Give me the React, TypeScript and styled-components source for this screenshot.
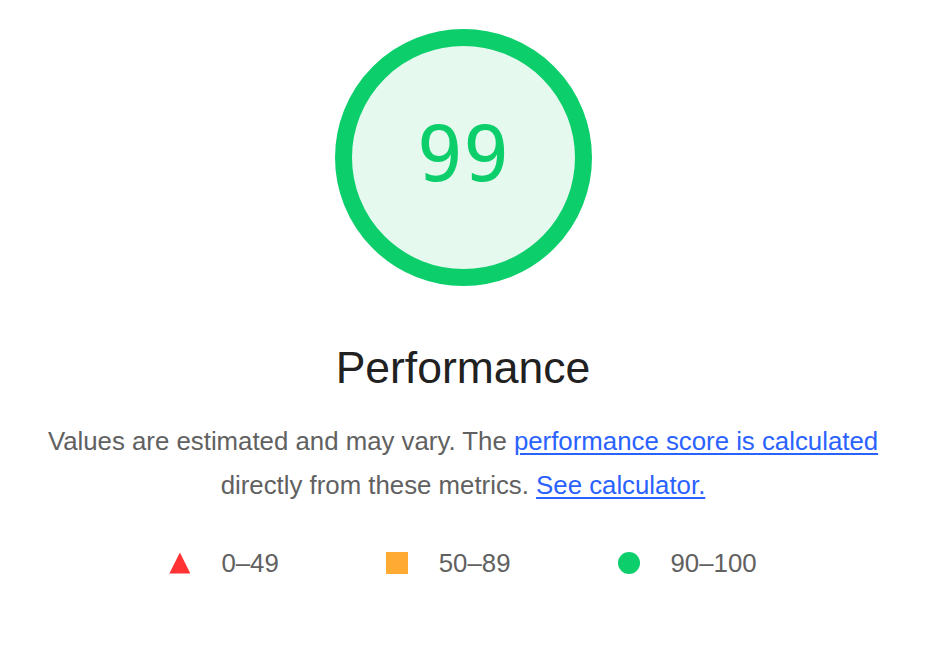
import React from "react";
import styled, { createGlobalStyle } from "styled-components";

const GlobalStyle = createGlobalStyle`
	html, body {
		margin: 0;
		padding: 0;
		background: #ffffff;
	}
	body {
		font-family: "Liberation Sans", Arial, sans-serif;
	}
`;

const ranges = [
	{ kind: "fail", label: "0–49" },
	{ kind: "average", label: "50–89" },
	{ kind: "pass", label: "90–100" },
] as const;

export default function App() {
	return (
		<>
			<GlobalStyle />
			<Page>
				<Gauge>
					<Score>99</Score>
				</Gauge>
				<Title>Performance</Title>
				<Description>
					Values are estimated and may vary. The{" "}
					<Link href="#">performance score is calculated</Link> directly from these
					metrics. <Link href="#">See calculator.</Link>
				</Description>
				<Legend>
					{ranges.map((r) => (
						<LegendItem key={r.kind}>
							<Marker $kind={r.kind} />
							<LegendLabel>{r.label}</LegendLabel>
						</LegendItem>
					))}
				</Legend>
			</Page>
		</>
	);
}

const Page = styled.div`
	display: flex;
	flex-direction: column;
	align-items: center;
	width: 926px;
	padding-top: 29px;
	height: 650px;
	box-sizing: border-box;
`;

const Gauge = styled.div`
	width: 257px;
	height: 257px;
	box-sizing: border-box;
	border: 17px solid #0cce6b;
	border-radius: 50%;
	background: #e6f9ef;
	display: flex;
	align-items: center;
	justify-content: center;
`;

const Score = styled.div`
	font-family: "DejaVu Sans Mono", monospace;
	font-size: 77px;
	line-height: 1;
	color: #0cce6b;
	padding-bottom: 6px;
`;

const Title = styled.h2`
	margin: 60px 0 0;
	font-size: 44.5px;
	font-weight: 400;
	line-height: 44px;
	color: #212121;
`;

const Description = styled.p`
	margin: 29px 0 0;
	max-width: 880px;
	text-align: center;
	font-size: 25.8px;
	line-height: 44px;
	color: #616161;
`;

const Link = styled.a`
	color: #2962ff;
	text-decoration: underline;
	text-underline-offset: 3px;
`;

const Legend = styled.div`
	display: flex;
	align-items: center;
	gap: 107px;
	margin-top: 41px;
`;

const LegendItem = styled.div`
	display: flex;
	align-items: center;
	gap: 31px;
`;

const markerColor = {
	fail: "#ff3333",
	average: "#ffaa33",
	pass: "#0cce6b",
};

const Marker = styled.span<{ $kind: "fail" | "average" | "pass" }>`
	display: block;
	width: ${(p) => (p.$kind === "fail" ? "21px" : "22px")};
	height: ${(p) => (p.$kind === "fail" ? "21px" : "22px")};
	background: ${(p) => markerColor[p.$kind]};
	border-radius: ${(p) => (p.$kind === "pass" ? "50%" : "0")};
	clip-path: ${(p) =>
		p.$kind === "fail" ? "polygon(50% 0, 100% 100%, 0 100%)" : "none"};
`;

const LegendLabel = styled.span`
	font-size: 25.8px;
	line-height: 30px;
	color: #616161;
`;
